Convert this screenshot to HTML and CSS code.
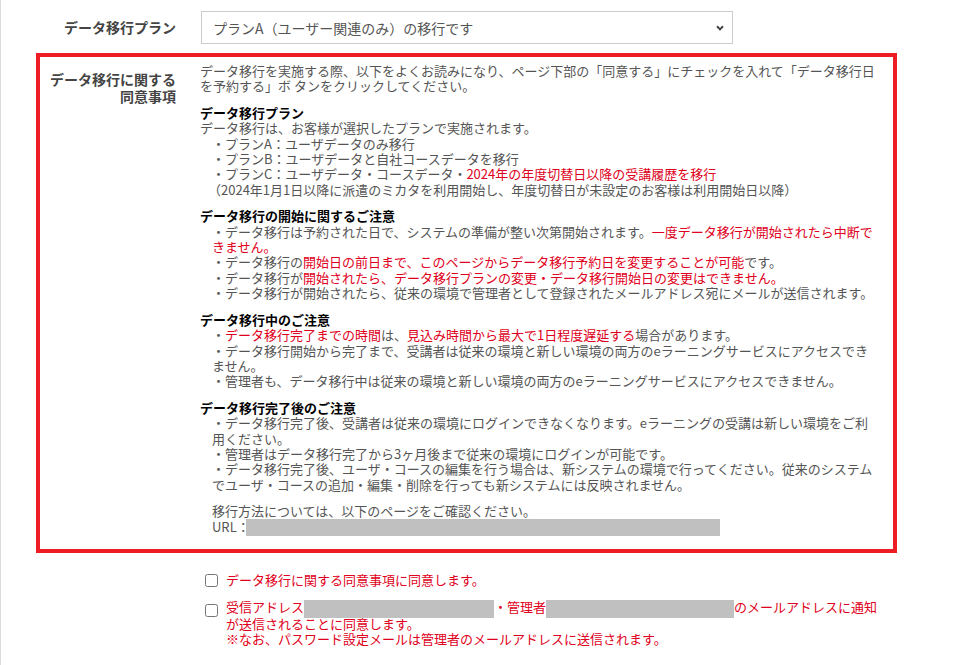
FILE: index.html
```html
<!DOCTYPE html>
<html lang="ja">
<head>
    <meta charset="UTF-8">
    <meta name="viewport" content="width=device-width, initial-scale=1.0">
    <title>データ移行</title>
    <link rel="stylesheet" href="styles.css">
</head>
<body>
    <div class="page">
        <div class="plan-row">
            <div class="form-label">データ移行プラン</div>
            <div class="select-box">
                <span>プランA（ユーザー関連のみ）の移行です</span>
                <svg class="chevron" width="8" height="6" viewBox="0 0 8 6">
                    <path d="M1 1.2 L4 4.4 L7 1.2" fill="none" stroke="#444" stroke-width="2"/>
                </svg>
            </div>
        </div>

        <div class="consent-box">
            <div class="form-label consent-label">データ移行に関する<br>同意事項</div>
            <div class="consent-body">
                <p>データ移行を実施する際、以下をよくお読みになり、ページ下部の「同意する」にチェックを入れて「データ移行日を予約する」ボ タンをクリックしてください。</p>

                <div class="block">
                    <h3>データ移行プラン</h3>
                    <p>データ移行は、お客様が選択したプランで実施されます。</p>
                    <ul>
                        <li>・プランA：ユーザデータのみ移行</li>
                        <li>・プランB：ユーザデータと自社コースデータを移行</li>
                        <li>・プランC：ユーザデータ・コースデータ・<span class="alert">2024年の年度切替日以降の受講履歴を移行</span></li>
                        <li class="note">（2024年1月1日以降に派遣のミカタを利用開始し、年度切替日が未設定のお客様は利用開始日以降）</li>
                    </ul>
                </div>

                <div class="block">
                    <h3>データ移行の開始に関するご注意</h3>
                    <ul>
                        <li>・データ移行は予約された日で、システムの準備が整い次第開始されます。<span class="alert">一度データ移行が開始されたら中断できません。</span></li>
                        <li>・データ移行の<span class="alert">開始日の前日まで、このページからデータ移行予約日を変更することが可能</span>です。</li>
                        <li>・データ移行が<span class="alert">開始されたら、データ移行プランの変更・データ移行開始日の変更はできません。</span></li>
                        <li>・データ移行が開始されたら、従来の環境で管理者として登録されたメールアドレス宛にメールが送信されます。</li>
                    </ul>
                </div>

                <div class="block">
                    <h3>データ移行中のご注意</h3>
                    <ul>
                        <li>・<span class="alert">データ移行完了までの時間</span>は、<span class="alert">見込み時間から最大で1日程度遅延する</span>場合があります。</li>
                        <li>・データ移行開始から完了まで、受講者は従来の環境と新しい環境の両方のeラーニングサービスにアクセスできません。</li>
                        <li>・管理者も、データ移行中は従来の環境と新しい環境の両方のeラーニングサービスにアクセスできません。</li>
                    </ul>
                </div>

                <div class="block">
                    <h3>データ移行完了後のご注意</h3>
                    <ul>
                        <li>・データ移行完了後、受講者は従来の環境にログインできなくなります。eラーニングの受講は新しい環境をご利用ください。</li>
                        <li>・管理者はデータ移行完了から3ヶ月後まで従来の環境にログインが可能です。</li>
                        <li>・データ移行完了後、ユーザ・コースの編集を行う場合は、新システムの環境で行ってください。従来のシステムでユーザ・コースの追加・編集・削除を行っても新システムには反映されません。</li>
                    </ul>
                </div>

                <div class="block indent">
                    <p>移行方法については、以下のページをご確認ください。</p>
                    <p>URL：<span class="masked url-mask"></span></p>
                </div>
            </div>
        </div>

        <div class="agree">
            <label class="agree-row">
                <input type="checkbox">
                <span class="agree-text">データ移行に関する同意事項に同意します。</span>
            </label>
            <label class="agree-row second">
                <input type="checkbox">
                <span class="agree-text">受信アドレス<span class="masked mail-mask"></span>・管理者<span class="masked admin-mask"></span>のメールアドレスに通知が送信されることに同意します。<br>※なお、パスワード設定メールは管理者のメールアドレスに送信されます。</span>
            </label>
        </div>
    </div>
</body>
</html>
```

FILE: styles.css
```css
body {
    margin: 0;
    font-family: "Noto Sans CJK JP", sans-serif;
    color: #555;
    background-color: #fff;
}
.page {
    min-height: 665px;
    box-sizing: border-box;
    padding-top: 11px;
    border-left: 1px solid #dcdcdc;
}

/* plan selector row */
.plan-row {
    display: flex;
    align-items: center;
}
.form-label {
    width: 175px;
    text-align: right;
    font-size: 14px;
    line-height: 17px;
    font-weight: bold;
    color: #444;
}
.select-box {
    margin-left: 25px;
    width: 532px;
    height: 33px;
    box-sizing: border-box;
    border: 1px solid #ccc;
    padding: 0 8px 0 11px;
    display: flex;
    align-items: center;
    justify-content: space-between;
    font-size: 14px;
    color: #555;
}

/* consent terms */
.consent-box {
    margin: 9px 0 0 35px;
    width: 861px;
    box-sizing: border-box;
    border: 4px solid #ee1c25;
    padding: 6px 13px 14px 0;
    display: grid;
    grid-template-columns: 136px 680px;
    column-gap: 24px;
}
.consent-label {
    width: auto;
    padding-top: 8px;
}
.consent-body {
    font-size: 13px;
    line-height: 15.4px;
}
.consent-body p,
.consent-body ul {
    margin: 0;
    padding: 0;
}
.consent-body ul {
    list-style: none;
    padding-left: 12px;
}
.consent-body li.note {
    margin-left: -4px;
}
.block {
    margin-top: 11px;
}
.block h3 {
    margin: 0;
    font-size: 13px;
    line-height: 15.4px;
    font-weight: bold;
    color: #000;
}
.block.indent {
    padding-left: 12px;
}
.alert {
    color: #e00020;
}
.masked {
    display: inline-block;
    background-color: #c0c0c0;
    vertical-align: middle;
}
.url-mask {
    width: 474px;
    height: 17px;
    margin: -2px 0 -1px -4px;
}

/* agreement checkboxes */
.agree {
    margin: 19px 0 0 200px;
    width: 684px;
    font-size: 13px;
    line-height: 15.4px;
    color: #e00020;
}
.agree-row {
    display: flex;
    align-items: flex-start;
}
.agree-row.second {
    margin-top: 12px;
}
.agree-row input {
    flex: none;
    width: 13px;
    height: 13px;
    margin: 2px 8px 0 4px;
}
.agree-row.second input {
    margin-top: 5px;
}
.mail-mask {
    width: 190px;
    height: 18px;
    margin: -2px 0;
}
.admin-mask {
    width: 188px;
    height: 18px;
    margin: -2px 0;
}
```
